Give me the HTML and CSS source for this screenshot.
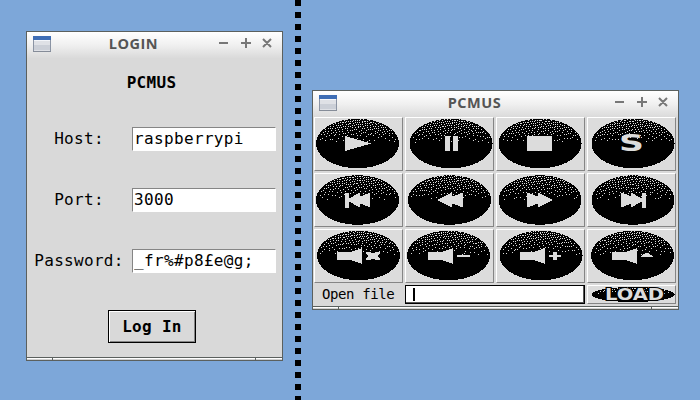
FILE: index.html
```html
<!DOCTYPE html>
<html lang="en">
<head>
<meta charset="utf-8">
<title>PCMUS</title>
<link rel="stylesheet" href="styles.css">
</head>
<body>
<svg class="defs" width="0" height="0" aria-hidden="true">
  <symbol id="app" viewBox="0 0 18 16"><rect x=".5" y=".5" width="17" height="15" fill="#dfe1e6" stroke="#8b94a4"/><rect x="1" y="9" width="16" height="5" fill="#cbcfd7"/><rect width="18" height="4" fill="#3e6db5"/><rect x="1" y="4" width="16" height="1" fill="#f4f6fa"/><rect y="15" width="18" height="1" fill="#858c98"/></symbol>
  <symbol id="controls" viewBox="0 0 54 12"><path d="M0 5H9M22 5H32M27 0V10M44 1L52 9M52 1L44 9" fill="none" stroke="#777" stroke-width="2"/></symbol>
</svg>
<main class="desktop">
  <section class="window login">
    <header class="titlebar"><svg class="app-icon"><use href="#app"/></svg><h1>LOGIN</h1><svg class="controls"><use href="#controls"/></svg></header>
    <form class="login-form">
      <h2>PCMUS</h2>
      <label><span>Host:</span><input value="raspberrypi"></label>
      <label><span>Port:</span><input value="3000"></label>
      <label><span>Password:</span><input value="_fr%#p8£e@g;"></label>
      <button type="button">Log In</button>
    </form>
    <footer class="grip"></footer>
  </section>
  <div class="divider"></div>
  <section class="window player">
    <header class="titlebar"><svg class="app-icon"><use href="#app"/></svg><h1>PCMUS</h1><svg class="controls"><use href="#controls"/></svg></header>
    <div class="pad">
      <svg class="key" data-cx="43.5" data-cy="26.5"><path d="M31 19L57 26.5L31 34Z"/></svg>
      <svg class="key" data-cx="46" data-cy="26.5"><path d="M40 19h5v15h-5zM48 19h5v15h-5z"/></svg>
      <svg class="key" data-cx="44" data-cy="26.5"><path d="M31 19h25v15h-25z"/></svg>
      <svg class="key" data-cx="46" data-cy="26.5"><text class="letter" x="32" y="34" textLength="25" lengthAdjust="spacingAndGlyphs">S</text></svg>
      <svg class="key" data-cx="43.5" data-cy="27"><path d="M31 19.5h4v6l11-6v4l10-4v15l-10-4v4l-11-6v6h-4z"/></svg>
      <svg class="key" data-cx="44.5" data-cy="27"><path d="M32.5 27L47 19.5v4l11-4v15l-11-4v4z"/></svg>
      <svg class="key" data-cx="44" data-cy="27"><path d="M56.5 27L42 19.5v4l-11-4v15l11-4v4z"/></svg>
      <svg class="key" data-cx="46" data-cy="27"><path d="M59 19.5h-4v6l-11-6v4l-10-4v15l10-4v4l11-6v6h4z"/></svg>
      <svg class="key" data-cx="44.5" data-cy="26.5"><path d="M23 23h14l11-4v16l-11-4h-14zM52 23h4l2 1h2l2-1h4v2l-3 2l3 2v2h-4l-2-1h-2l-2 1h-4v-2l3-2l-3-2z"/></svg>
      <svg class="key" data-cx="43.5" data-cy="26.5"><path d="M23 23h14l11-4v16l-11-4h-14zM52 26h13v2h-13z"/></svg>
      <svg class="key" data-cx="45" data-cy="26.5"><path d="M24 23h14l11-4v16l-11-4h-14zM53 26h4v-3h4v3h4v2h-4v3h-4v-3h-4z"/></svg>
      <svg class="key" data-cx="45.5" data-cy="26.5"><path d="M25 23h14l11-4v16l-11-4h-14zM54 28v-1l5-3h2l5 3v1z"/></svg>
    </div>
    <div class="file-row">
      <label for="file">Open file</label>
      <div class="entry" id="file"><span class="caret"></span></div>
      <svg class="key load" data-cx="46" data-cy="9.5" data-ry="7.5"><text class="word" x="18" y="15" textLength="59" lengthAdjust="spacingAndGlyphs">LOAD</text></svg>
    </div>
    <footer class="grip"></footer>
  </section>
</main>
<script src="keys.js"></script>
</body>
</html>
```
FILE: styles.css
```css
* { box-sizing: border-box; }
body { margin: 0; overflow: hidden; background: #7da7d9; }
.defs { position: absolute; }
.desktop { position: relative; width: 700px; height: 400px; }
.window { position: absolute; display: flex; flex-direction: column; background: #d9d9d9; border: 1px solid #5b605e; }
.login { left: 26px; top: 31px; width: 257px; height: 330px; }
.player { left: 312px; top: 90px; width: 367px; height: 220px; }
.divider { position: absolute; left: 295px; top: 0; width: 6px; height: 400px; background: repeating-linear-gradient(#000 0 6px, transparent 6px 12px); }
.titlebar { flex: none; height: 26px; padding: 0 9px 2px 6px; display: flex; align-items: center; background: linear-gradient(#fff, #f0f0f0 50%, #dadada); }
.app-icon { flex: none; width: 18px; height: 16px; }
.controls { flex: none; width: 54px; height: 12px; }
.titlebar h1 { flex: 1; margin: 0; padding-right: 3px; text-align: center; font: bold 14.5px/20px "Open Sans", sans-serif; letter-spacing: .5px; color: #555; }
.login-form { flex: 1; display: flex; flex-direction: column; align-items: center; font: 16px/20px "DejaVu Sans Mono", monospace; letter-spacing: .3px; }
.login-form h2 { margin: 15px 0 34px; padding-right: 6px; font: inherit; font-weight: bold; }
.login-form label { display: flex; align-self: stretch; height: 24px; margin: 0 6px 37px 5px; align-items: center; }
.login-form label span { width: 94px; margin-right: 6px; text-align: center; white-space: nowrap; }
.login-form input { width: 144px; height: 24px; padding: 0 1px 2px; border: 1px solid; border-color: #858585 #fff #fff #858585; background: #fff; color: #000; font: inherit; letter-spacing: .35px; outline: 0; }
.login-form button { width: 88px; height: 33px; margin-right: 5px; padding: 0; border: 1px solid #000; box-shadow: inset 1px 1px #fff, inset -1px -1px #858585; background: #d9d9d9; color: #000; font: inherit; font-weight: bold; letter-spacing: inherit; }
.grip { flex: none; height: 3px; margin-top: auto; border-top: 1px solid #5b605e; background: linear-gradient(90deg, transparent 25px, #5b605e 25px 26px, transparent 26px calc(100% - 27px), #5b605e calc(100% - 27px) calc(100% - 26px), transparent calc(100% - 26px)), linear-gradient(#fff 1px, #d0d0d0 1px); }
.pad { display: grid; grid-template-columns: repeat(4, 89px); grid-auto-rows: 54px; gap: 2px; padding-left: 1px; }
.key { display: block; width: 89px; height: 54px; background: #dcdcdc; border: 1px solid; border-color: #fff #858585 #858585 #fff; overflow: hidden; fill: #dcdcdc; shape-rendering: crispEdges; }
.key .disc { fill: #000; }
.letter { font: bold 23px "DejaVu Sans", sans-serif; }
.word { font: bold 15px "DejaVu Sans", sans-serif; stroke: #000; stroke-width: 2px; paint-order: stroke; }
.file-row { display: grid; grid-template-columns: 89px 180px 89px; column-gap: 2px; height: 19px; margin-top: 2px; padding-left: 1px; }
.file-row label { padding-left: 8px; font: 14px/19px "DejaVu Sans Mono", monospace; letter-spacing: -.4px; white-space: nowrap; }
.entry { border: 1px solid #000; box-shadow: inset -1px -1px #555; background: #fff; padding: 2px 7px; }
.caret { display: block; width: 2px; height: 13px; background: #000; }
.load { height: 19px; }
```
FILE: keys.js
```js
// Shade the upper half of every key disc with error-diffused light pixels.
document.querySelectorAll('.key').forEach((key, index) => {
  const cx = +key.dataset.cx, cy = +key.dataset.cy;
  const rx = 41.5, ry = +(key.dataset.ry || 24.7);
  const height = key.classList.contains('load') ? 19 : 54;
  // The border takes one pixel from the drawing area.
  key.setAttribute('viewBox', `1 1 87 ${height - 2}`);
  let disc = '', dots = '';
  let row = new Array(92).fill(0);
  for (let y = 0; y < height; y++) {
    const next = new Array(92).fill(0);
    const dy = (y + .5 - cy) / ry;
    if (Math.abs(dy) < 1) {
      const half = rx * Math.sqrt(1 - dy * dy);
      const a = Math.round(cx - half), b = Math.round(cx + half);
      disc += `M${a} ${y}h${b - a}v1h${a - b}z`;
      for (let x = a + 1; x < b - 1; x++) {
        const side = (x - cx) / rx;
        const shade = Math.max(0, -dy + .12 * side * side) * .27;
        const noise = (Math.sin((x + index * 7) * 12.9898 + y * 78.233) * 43758.5453 % 1) * .3;
        const value = shade + row[x];
        const on = dy < 0 && value + noise > .5 ? 1 : 0;
        if (on) dots += `M${x} ${y}h1v1h-1z`;
        const error = value - on;
        row[x + 1] += error * 7 / 16;
        next[x - 1] += error * 3 / 16;
        next[x] += error * 5 / 16;
        next[x + 1] += error / 16;
      }
    }
    row = next;
  }
  key.insertAdjacentHTML('afterbegin', `<path class="disc" d="${disc}"/><path d="${dots}"/>`);
});
```
